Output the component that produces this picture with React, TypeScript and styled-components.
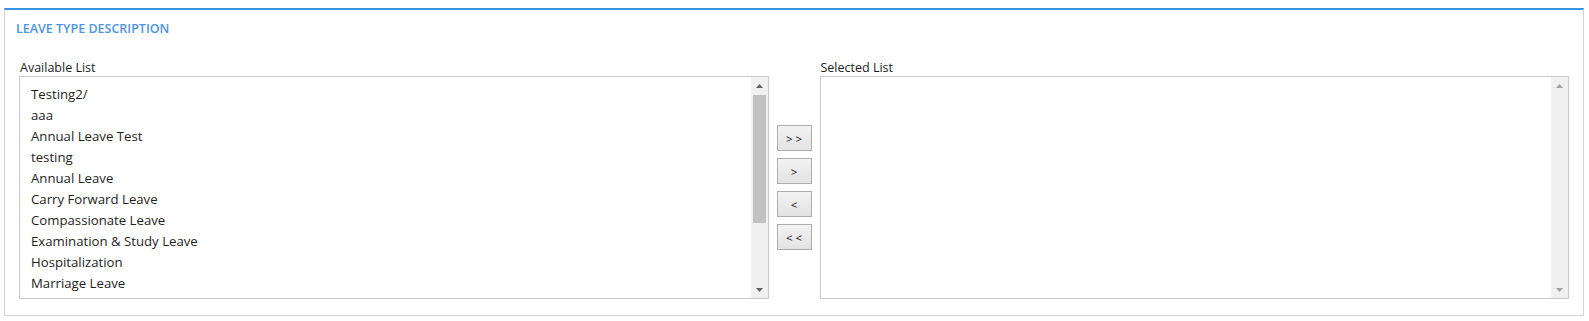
import styled, { createGlobalStyle } from 'styled-components';

const GlobalStyle = createGlobalStyle`
  body {
    margin: 0;
    background: #ffffff;
    font-family: 'Open Sans', 'Noto Sans', sans-serif;
    color: #222222;
  }
`;

const Panel = styled.section`
  margin: 8px 5px 0 4px;
  border: 1px solid #d4d4d4;
  border-top: 2px solid #3593ec;
  box-sizing: border-box;
  height: 308px;
`;

const Header = styled.div`
  padding: 11px 11px 0;
  height: 35px;
  box-sizing: border-box;
`;

const Title = styled.h2`
  margin: 0;
  font-size: 12.5px;
  line-height: 16px;
  font-weight: 600;
  color: #4b93e4;
`;

const Body = styled.div`
  display: grid;
  grid-template-columns: 1fr 35px 1fr;
  column-gap: 8px;
  padding: 14px 14px 0;
`;

const Column = styled.div`
  display: flex;
  flex-direction: column;
  min-width: 0;
`;

const Label = styled.label`
  font-size: 12.5px;
  line-height: 17px;
  padding-left: 1px;
  color: #1e1e1e;
`;

const ListBox = styled.div`
  display: flex;
  height: 223px;
  border: 1px solid #c9c9c9;
  box-sizing: border-box;
  background: #ffffff;
`;

const Options = styled.ul`
  flex: 1;
  margin: 0;
  padding: 7px 11px 0;
  list-style: none;
  overflow: hidden;
`;

const Option = styled.li`
  font-size: 13.2px;
  line-height: 21px;
  white-space: nowrap;
  color: #1e1e1e;
`;

const Scrollbar = styled.div`
  width: 17px;
  display: flex;
  flex-direction: column;
  background: #f0f0f0;
`;

const Arrow = styled.div<{ $active: boolean }>`
  height: 17px;
  display: flex;
  align-items: center;
  justify-content: center;
  color: ${(p) => (p.$active ? '#606060' : '#a3a3a3')};
`;

const Track = styled.div`
  flex: 1;
  position: relative;
`;

const Thumb = styled.div`
  position: absolute;
  left: 2px;
  right: 2px;
  background: #c1c1c1;
`;

const Buttons = styled.div`
  display: flex;
  flex-direction: column;
  justify-content: center;
  gap: 7px;
  padding-top: 17px;
`;

const MoveButton = styled.button`
  width: 35px;
  height: 26px;
  padding: 0;
  border: 1px solid #adadad;
  border-radius: 0;
  background: linear-gradient(#f2f2f2, #e3e3e3);
  font-family: 'Open Sans', 'Noto Sans', sans-serif;
  font-size: 11.5px;
  color: #111111;
  white-space: pre;
  cursor: pointer;
`;

// only the rows that fit are drawn; total drives the thumb size
const available = [
  'Testing2/',
  'aaa',
  'Annual Leave Test',
  'testing',
  'Annual Leave',
  'Carry Forward Leave',
  'Compassionate Leave',
  'Examination & Study Leave',
  'Hospitalization',
  'Marriage Leave',
];

const Triangle = ({ up }: { up?: boolean }) => (
  <svg width="7" height="4" viewBox="0 0 7 4">
    <path d={up ? 'M3.5 0 L7 4 L0 4 Z' : 'M0 0 L7 0 L3.5 4 Z'} fill="currentColor" />
  </svg>
);

const List = ({ items, total }: { items: string[]; total: number }) => {
  const active = total > items.length;
  const thumbHeight = active ? Math.round((items.length / total) * 187) : 0;

  return (
    <ListBox>
      <Options>
        {items.map((item) => (
          <Option key={item}>{item}</Option>
        ))}
      </Options>
      <Scrollbar>
        <Arrow $active={active}>
          <Triangle up />
        </Arrow>
        <Track>{active && <Thumb style={{ top: 1, height: thumbHeight }} />}</Track>
        <Arrow $active={active}>
          <Triangle />
        </Arrow>
      </Scrollbar>
    </ListBox>
  );
};

export default function App() {
  return (
    <>
      <GlobalStyle />
      <Panel>
        <Header>
          <Title>LEAVE TYPE DESCRIPTION</Title>
        </Header>
        <Body>
          <Column>
            <Label>Available List</Label>
            <List items={available} total={14.6} />
          </Column>
          <Buttons>
            <MoveButton>&gt; &gt;</MoveButton>
            <MoveButton>&gt;</MoveButton>
            <MoveButton>&lt;</MoveButton>
            <MoveButton>&lt; &lt;</MoveButton>
          </Buttons>
          <Column>
            <Label>Selected List</Label>
            <List items={[]} total={0} />
          </Column>
        </Body>
      </Panel>
    </>
  );
}
